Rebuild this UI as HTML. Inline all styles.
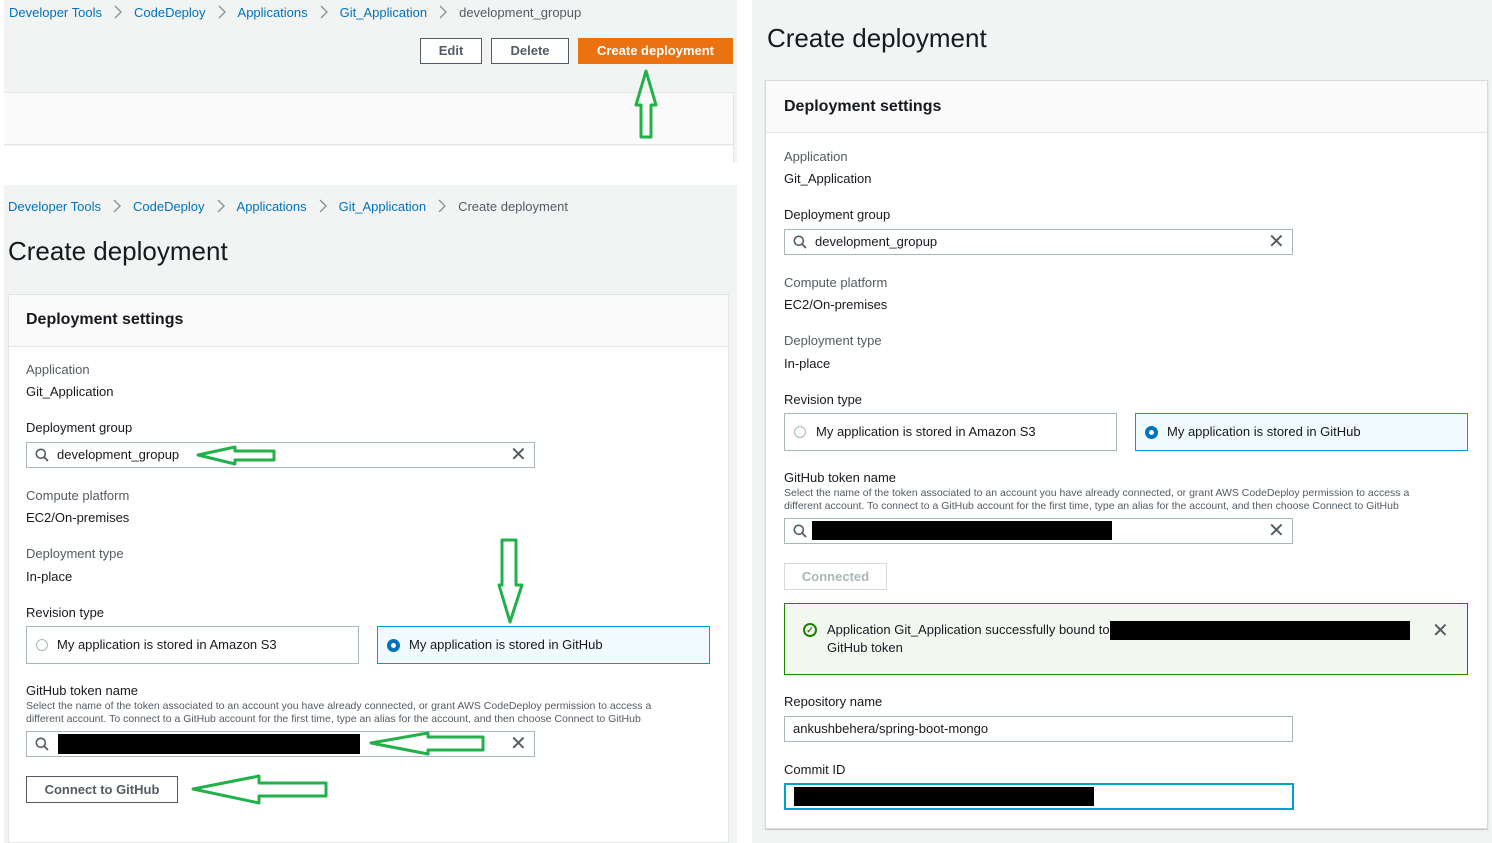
<!DOCTYPE html>
<html><head><meta charset="utf-8"><style>
*{margin:0;padding:0;box-sizing:border-box}
body{width:1492px;height:843px;position:relative;overflow:hidden;background:#fff;font-family:"Liberation Sans",Arial,sans-serif;font-size:13px;color:#16191f}
.a{position:absolute;white-space:nowrap;line-height:16px}
.bg{position:absolute;background:#f2f3f3}
.lk{color:#0073bb}
.gr{color:#545b64}
.sep{display:inline-block;width:9px;height:14px;margin:0 11px 0 12px;vertical-align:-2px}
.box{position:absolute;background:#fff;border:1px solid #aab7b8}
.h2{font-size:16px;font-weight:bold;line-height:22px}
.h1{font-size:26px;line-height:30px}
.btn{position:absolute;border:1px solid #545b64;background:#fff;font-weight:bold;color:#545b64;text-align:center;font-size:13px}
.blk{position:absolute;background:#000}
.x{position:absolute;font-size:20px;line-height:20px;color:#545b64}
.mg{position:absolute;width:14px;height:14px}
</style></head><body>
<svg width="0" height="0" style="position:absolute"><defs>
<symbol id="ch" viewBox="0 0 9 14"><path d="M1 1 L7 7 L1 13" fill="none" stroke="#879596" stroke-width="1.4"/></symbol>
<symbol id="mg" viewBox="0 0 14 14"><circle cx="5.8" cy="5.8" r="4.5" fill="none" stroke="#545b64" stroke-width="1.6"/><path d="M9 9 L13 13" stroke="#545b64" stroke-width="1.8"/></symbol>
</defs></svg>
<!-- top-left screenshot -->
<div class="bg" style="left:4px;top:0;width:733px;height:163px"></div>
<div class="a" style="left:9px;top:5px"><span class="lk">Developer Tools</span><svg class="sep"><use href="#ch"/></svg><span class="lk">CodeDeploy</span><svg class="sep"><use href="#ch"/></svg><span class="lk">Applications</span><svg class="sep"><use href="#ch"/></svg><span class="lk">Git_Application</span><svg class="sep"><use href="#ch"/></svg><span class="gr">development_gropup</span></div>
<div class="btn" style="left:420px;top:38px;width:62px;height:26px;line-height:24px">Edit</div>
<div class="btn" style="left:491px;top:38px;width:78px;height:26px;line-height:24px">Delete</div>
<div class="btn" style="left:578px;top:38px;width:155px;height:26px;line-height:26px;background:#ec7211;border:none;color:#fff">Create deployment</div>
<div style="position:absolute;left:4px;top:92px;width:730px;height:53px;background:#fafafa;border-top:1px solid #e4e6e6;border-bottom:1px solid #e4e6e6;border-right:1px solid #e4e6e6"></div>
<div style="position:absolute;left:4px;top:146px;width:730px;height:17px;background:#fff;border-right:1px solid #e4e6e6"></div>
<div style="position:absolute;left:737px;top:0;width:15px;height:843px;background:#fff"></div>

<!-- bottom-left screenshot -->
<div class="bg" style="left:4px;top:185px;width:733px;height:658px"></div>
<div class="a" style="left:8px;top:199px"><span class="lk">Developer Tools</span><svg class="sep"><use href="#ch"/></svg><span class="lk">CodeDeploy</span><svg class="sep"><use href="#ch"/></svg><span class="lk">Applications</span><svg class="sep"><use href="#ch"/></svg><span class="lk">Git_Application</span><svg class="sep"><use href="#ch"/></svg><span class="gr">Create deployment</span></div>
<div class="a h1" style="left:8px;top:236px">Create deployment</div>
<div style="position:absolute;left:8px;top:294px;width:721px;height:549px;background:#fff;border:1px solid #e4e6e6"></div>
<div style="position:absolute;left:9px;top:295px;width:719px;height:52px;background:#fafafa;border-bottom:1px solid #e4e6e6"></div>
<div class="a h2" style="left:26px;top:309px">Deployment settings</div>
<div class="a gr" style="left:26px;top:362px">Application</div>
<div class="a" style="left:26px;top:384px">Git_Application</div>
<div class="a" style="left:26px;top:420px">Deployment group</div>
<div class="box" style="left:26px;top:442px;width:509px;height:26px"></div>
<svg class="mg" style="left:35px;top:448px"><use href="#mg"/></svg>
<div class="a" style="left:57px;top:447px">development_gropup</div>
<div class="x" style="left:510px;top:445px">✕</div>
<div class="a gr" style="left:26px;top:488px">Compute platform</div>
<div class="a" style="left:26px;top:510px">EC2/On-premises</div>
<div class="a gr" style="left:26px;top:546px">Deployment type</div>
<div class="a" style="left:26px;top:569px">In-place</div>
<div class="a" style="left:26px;top:605px">Revision type</div>
<div class="box" style="left:26px;top:626px;width:333px;height:38px"></div>
<div style="position:absolute;left:36px;top:639px;width:12px;height:12px;border:1px solid #aab7b8;border-radius:50%"></div>
<div class="a" style="left:57px;top:637px">My application is stored in Amazon S3</div>
<div class="box" style="left:377px;top:626px;width:333px;height:38px;background:#f1faff;border-color:#00a1c9"></div>
<div style="position:absolute;left:387px;top:639px;width:13px;height:13px;border:4px solid #0073bb;border-radius:50%;background:#fff"></div>
<div class="a" style="left:409px;top:637px">My application is stored in GitHub</div>
<div class="a" style="left:26px;top:683px">GitHub token name</div>
<div class="a gr" style="left:26px;top:700px;font-size:10.5px;line-height:13px">Select the name of the token associated to an account you have already connected, or grant AWS CodeDeploy permission to access a<br>different account. To connect to a GitHub account for the first time, type an alias for the account, and then choose Connect to GitHub</div>
<div class="box" style="left:26px;top:731px;width:509px;height:26px"></div>
<svg class="mg" style="left:35px;top:737px"><use href="#mg"/></svg>
<div class="blk" style="left:58px;top:734px;width:302px;height:20px"></div>
<div class="x" style="left:510px;top:734px">✕</div>
<div class="btn" style="left:26px;top:776px;width:152px;height:27px;line-height:25px">Connect to GitHub</div>

<!-- right screenshot -->
<div class="bg" style="left:752px;top:0;width:740px;height:843px"></div>
<div class="a h1" style="left:767px;top:23px">Create deployment</div>
<div style="position:absolute;left:765px;top:80px;width:723px;height:749px;background:#fff;border:1px solid #d5dbdb;box-shadow:0 1px 1px rgba(0,0,0,.2)"></div>
<div style="position:absolute;left:766px;top:81px;width:721px;height:52px;background:#fafafa;border-bottom:1px solid #e4e6e6"></div>
<div class="a h2" style="left:784px;top:96px">Deployment settings</div>
<div class="a gr" style="left:784px;top:149px">Application</div>
<div class="a" style="left:784px;top:171px">Git_Application</div>
<div class="a" style="left:784px;top:207px">Deployment group</div>
<div class="box" style="left:784px;top:229px;width:509px;height:26px"></div>
<svg class="mg" style="left:793px;top:235px"><use href="#mg"/></svg>
<div class="a" style="left:815px;top:234px">development_gropup</div>
<div class="x" style="left:1268px;top:232px">✕</div>
<div class="a gr" style="left:784px;top:275px">Compute platform</div>
<div class="a" style="left:784px;top:297px">EC2/On-premises</div>
<div class="a gr" style="left:784px;top:333px">Deployment type</div>
<div class="a" style="left:784px;top:356px">In-place</div>
<div class="a" style="left:784px;top:392px">Revision type</div>
<div class="box" style="left:784px;top:413px;width:333px;height:38px"></div>
<div style="position:absolute;left:794px;top:426px;width:12px;height:12px;border:1px solid #aab7b8;border-radius:50%"></div>
<div class="a" style="left:816px;top:424px">My application is stored in Amazon S3</div>
<div class="box" style="left:1135px;top:413px;width:333px;height:38px;background:#f1faff;border-color:#00a1c9"></div>
<div style="position:absolute;left:1145px;top:426px;width:13px;height:13px;border:4px solid #0073bb;border-radius:50%;background:#fff"></div>
<div class="a" style="left:1167px;top:424px">My application is stored in GitHub</div>
<div class="a" style="left:784px;top:470px">GitHub token name</div>
<div class="a gr" style="left:784px;top:487px;font-size:10.5px;line-height:13px">Select the name of the token associated to an account you have already connected, or grant AWS CodeDeploy permission to access a<br>different account. To connect to a GitHub account for the first time, type an alias for the account, and then choose Connect to GitHub</div>
<div class="box" style="left:784px;top:518px;width:509px;height:26px"></div>
<svg class="mg" style="left:793px;top:524px"><use href="#mg"/></svg>
<div class="blk" style="left:812px;top:521px;width:300px;height:19px"></div>
<div class="x" style="left:1268px;top:521px">✕</div>
<div class="btn" style="left:784px;top:563px;width:103px;height:27px;line-height:25px;border-color:#d5dbdb;color:#aab7b8">Connected</div>
<div style="position:absolute;left:784px;top:603px;width:684px;height:72px;background:#f2f8f0;border:1px solid #1d8102"></div>
<div style="position:absolute;left:803px;top:623px;width:14px;height:14px;border:2px solid #1d8102;border-radius:50%;color:#1d8102;font-size:9px;line-height:10px;text-align:center;font-weight:bold">✓</div>
<div class="a" style="left:827px;top:622px">Application Git_Application successfully bound to</div>
<div class="blk" style="left:1110px;top:621px;width:300px;height:19px"></div>
<div class="a" style="left:827px;top:640px">GitHub token</div>
<div class="x" style="left:1432px;top:621px">✕</div>
<div class="a" style="left:784px;top:694px">Repository name</div>
<div class="box" style="left:784px;top:716px;width:509px;height:26px"></div>
<div class="a" style="left:793px;top:721px">ankushbehera/spring-boot-mongo</div>
<div class="a" style="left:784px;top:762px">Commit ID</div>
<div class="box" style="left:784px;top:783px;width:510px;height:27px;border:2px solid #00a1c9"></div>
<div class="blk" style="left:794px;top:787px;width:300px;height:19px"></div>

<!-- green arrows -->
<svg style="position:absolute;left:0;top:0" width="1492" height="843" fill="none" stroke="#22b04b" stroke-width="3" stroke-linejoin="round">
<path d="M646 71 L636 105 L641 105 L641 137 L651 137 L651 105 L656 105 Z"/>
<path d="M198 455 L235 447 L235 451 L274 451 L274 460 L235 460 L235 464 Z"/>
<path d="M502 540 L516 540 L516 585 L522 585 L510 622 L499 585 L502 585 Z"/>
<path d="M371 743 L428 733 L428 737 L483 737 L483 750 L428 750 L428 754 Z"/>
<path d="M193 789 L259 776 L259 783 L326 783 L326 796 L259 796 L259 803 Z"/>
</svg>
</body></html>
